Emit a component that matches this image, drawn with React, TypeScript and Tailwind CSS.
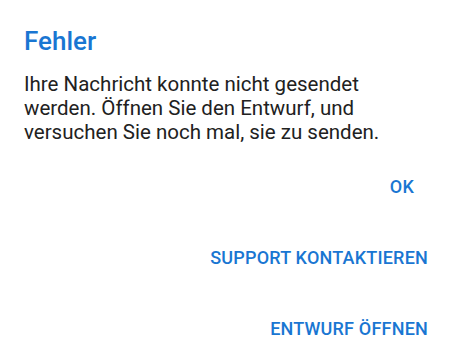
import React from "react";

export default function App() {
  return (
    <div
      className="w-[450px] h-[360px] bg-white overflow-hidden"
      style={{ fontFamily: "Roboto, 'Liberation Sans', sans-serif" }}
    >
      <div className="px-[24px] pt-[25px]">
        <h1 className="text-[26px] leading-[32px] font-medium text-[#1976d2]">Fehler</h1>
        <p className="mt-[15px] text-[20.5px] leading-[24px] text-[#212121]">
          Ihre Nachricht konnte nicht gesendet werden. Öffnen Sie den Entwurf, und versuchen Sie noch mal, sie zu senden.
        </p>
      </div>
      <div className="mt-[31px] flex flex-col items-end pr-[22px] gap-[47px] text-[18px] leading-[24px] font-medium tracking-[0.2px] text-[#1976d2]">
        <button className="mr-[14px]">OK</button>
        <button>SUPPORT KONTAKTIEREN</button>
        <button>ENTWURF ÖFFNEN</button>
      </div>
    </div>
  );
}
